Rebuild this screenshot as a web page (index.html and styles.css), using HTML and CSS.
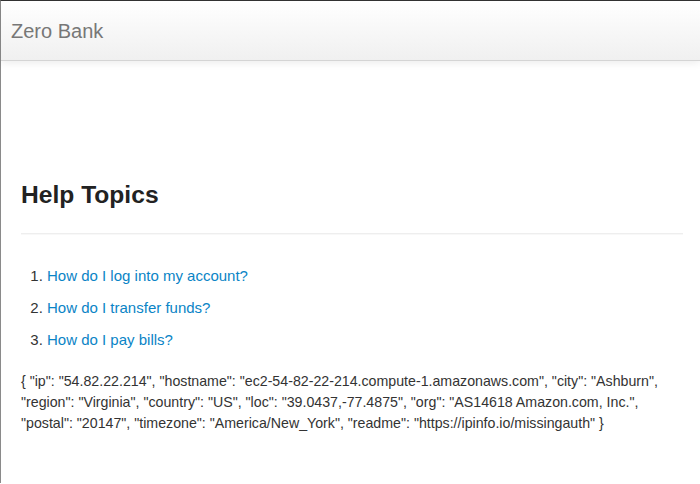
FILE: index.html
```html
<!DOCTYPE html>
<html>
<head>
<meta charset="utf-8">
<link rel="stylesheet" href="styles.css">
</head>
<body>
<div class="frame">
  <div class="navbar">
    <span class="brand">Zero Bank</span>
  </div>
  <div class="content">
    <h2 class="title">Help Topics</h2>
    <hr class="rule">
    <ol class="topics">
      <li><a href="#">How do I log into my account?</a></li>
      <li><a href="#">How do I transfer funds?</a></li>
      <li><a href="#">How do I pay bills?</a></li>
    </ol>
    <p class="json">{ "ip": "54.82.22.214", "hostname": "ec2-54-82-22-214.compute-1.amazonaws.com", "city": "Ashburn", "region": "Virginia", "country": "US", "loc": "39.0437,-77.4875", "org": "AS14618 Amazon.com, Inc.", "postal": "20147", "timezone": "America/New_York", "readme": "https://ipinfo.io/missingauth" }</p>
  </div>
</div>
</body>
</html>
```
FILE: styles.css
```css
html, body {
  margin: 0;
  padding: 0;
  background: #fff;
}
body {
  font-family: "Liberation Sans", Arial, sans-serif;
  color: #333;
}
.frame {
  border-top: 1px solid #333;
  border-left: 1px solid #8a8a8a;
  min-height: 483px;
  box-sizing: border-box;
}
.navbar {
  height: 60px;
  box-sizing: border-box;
  background: linear-gradient(to bottom, #ffffff, #f0f0f0);
  border-bottom: 1px solid #d4d4d4;
  box-shadow: 0 2px 8px rgba(0, 0, 0, 0.08);
  display: flex;
  align-items: center;
  padding-left: 10px;
}
.brand {
  font-size: 20px;
  color: #777;
  margin-top: 1px;
}
.content {
  padding: 0 17px 0 20px;
}
.title {
  margin: 0;
  padding-top: 116px;
  font-size: 24.6px;
  line-height: 36px;
  font-weight: bold;
  color: #222;
}
.rule {
  margin: 20px 0 0;
  border: 0;
  border-top: 1px solid #eee;
  border-bottom: 1px solid #f8f8f8;
  height: 0;
}
.topics {
  margin: 31px 0 0;
  padding-left: 26px;
  font-size: 15px;
  line-height: 20px;
}
.topics li {
  margin-bottom: 12px;
}
.topics a {
  color: #0a84c6;
  text-decoration: none;
}
.json {
  margin: 21px 0 0;
  font-size: 14.2px;
  line-height: 21px;
}
```
